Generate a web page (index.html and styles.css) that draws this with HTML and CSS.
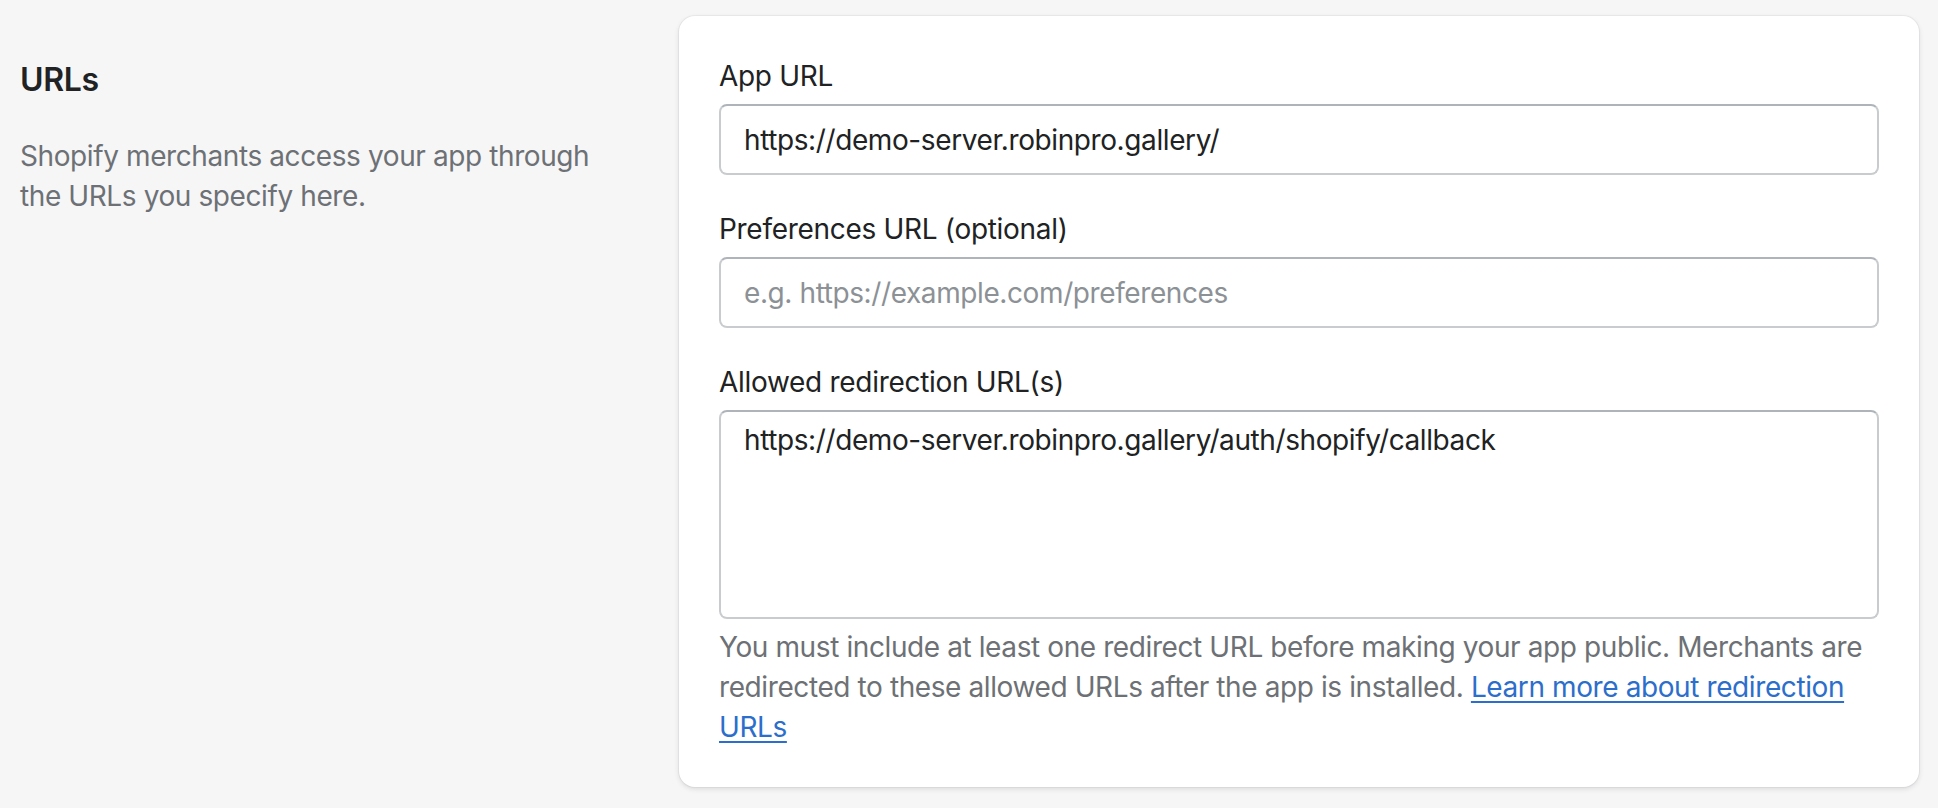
FILE: index.html
```html
<!DOCTYPE html>
<html lang="en">
<head>
<meta charset="utf-8">
<title>URLs</title>
<link rel="stylesheet" href="styles.css">
</head>
<body>
<div class="page">
  <section class="annotation">
    <h2 class="annotation-title">URLs</h2>
    <p class="annotation-desc">Shopify merchants access your app through the URLs you specify here.</p>
  </section>
  <section class="card">
    <div class="field">
      <label class="field-label" for="app-url">App URL</label>
      <input class="text-input" id="app-url" type="text" value="https://demo-server.robinpro.gallery/">
    </div>
    <div class="field">
      <label class="field-label" for="pref-url">Preferences URL (optional)</label>
      <input class="text-input" id="pref-url" type="text" placeholder="e.g. https://example.com/preferences">
    </div>
    <div class="field">
      <label class="field-label" for="redirect-urls">Allowed redirection URL(s)</label>
      <textarea class="text-area" id="redirect-urls">https://demo-server.robinpro.gallery/auth/shopify/callback</textarea>
      <p class="help-text">You must include at least one redirect URL before making your app public. Merchants are redirected to these allowed URLs after the app is installed. <a class="link" href="#">Learn more about redirection URLs</a></p>
    </div>
  </section>
</div>
</body>
</html>
```

FILE: styles.css
```css
* {
  box-sizing: border-box;
}

html, body {
  margin: 0;
  padding: 0;
  background: #f6f6f7;
}

body {
  font-family: Inter, "Noto Sans", "Liberation Sans", sans-serif;
  color: #202223;
  font-size: 28px;
  line-height: 40px;
  letter-spacing: -0.4px;
}

.page {
  display: flex;
  align-items: flex-start;
  gap: 20px;
  padding: 16px 19px 20px 20px;
}

.annotation {
  flex: 0 0 639px;
  padding: 40px 40px 0 0;
}

.annotation-title {
  margin: 0;
  font-size: 32px;
  line-height: 48px;
  font-weight: 600;
  letter-spacing: -0.3px;
  color: #202223;
}

.annotation-desc {
  margin: 32px 0 0;
  color: #6d7175;
}

.card {
  flex: 1 1 auto;
  background: #ffffff;
  border-radius: 16px;
  padding: 40px;
  box-shadow: 0 0 0 1px rgba(63, 63, 68, 0.05), 0 2px 5px 0 rgba(63, 63, 68, 0.15);
  display: flex;
  flex-direction: column;
  gap: 34px;
}

.field {
  display: flex;
  flex-direction: column;
}

.field-label {
  display: block;
  margin-bottom: 8px;
  color: #202223;
  letter-spacing: -0.3px;
}

.text-input,
.text-area {
  display: block;
  width: 100%;
  font: inherit;
  letter-spacing: -0.4px;
  color: #202223;
  background: #ffffff;
  border: 2px solid #c9cccf;
  border-top-color: #aeb4b9;
  border-radius: 8px;
  outline: none;
  margin: 0;
}

.text-input {
  height: 71px;
  padding: 0 24px 0 23px;
}

.text-input::placeholder {
  color: #8c9196;
  opacity: 1;
}

.text-area {
  height: 209px;
  padding: 8px 24px 8px 23px;
  resize: none;
  overflow: hidden;
}

.help-text {
  margin: 8px 0 0;
  color: #6d7175;
}

.link {
  color: #2c6ecb;
  text-decoration: underline;
  text-underline-offset: 4px;
}
```
